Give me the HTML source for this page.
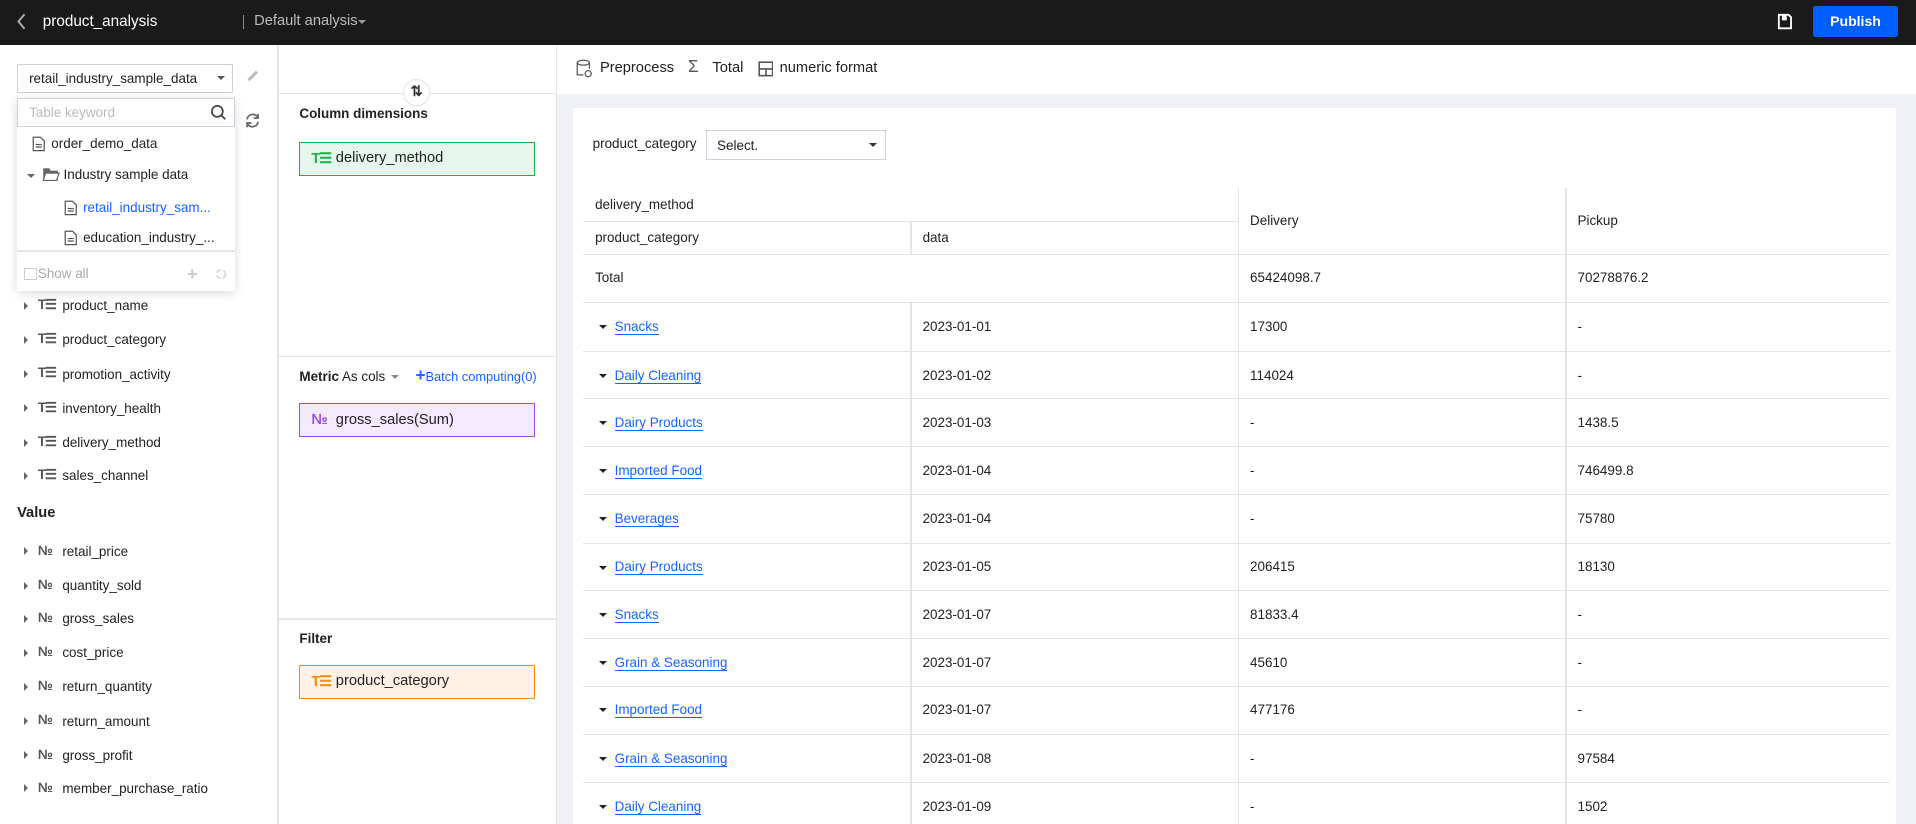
<!DOCTYPE html>
<html><head><meta charset="utf-8">
<style>
*{box-sizing:border-box;margin:0;padding:0}
html,body{width:1916px;height:824px;overflow:hidden;background:#fff}
#root{zoom:1.22194;width:1568px;height:675px;position:relative;font-family:"Liberation Sans",Arial,sans-serif;font-size:11px;color:#222}
.a{position:absolute}
.hdr{left:0;top:0;width:1568px;height:37px;background:#1a1a1a}
.t{white-space:nowrap}
.fi{position:absolute;left:0;height:16px;width:227px}
.fi .ar{position:absolute;left:20px;top:4px;width:0;height:0;border-left:4px solid #666;border-top:3.5px solid transparent;border-bottom:3.5px solid transparent}
.fi .ic{position:absolute;left:31px;top:0;font-size:11px;color:#555;font-weight:bold;letter-spacing:-1px}
.fi .tx{position:absolute;left:51px;top:1px}
.row{position:absolute;left:477px;width:1070px;height:39px;border-top:1px solid #e3e4e8}
.row .c1{position:absolute;left:26px;top:13px}
.row .c2{position:absolute;left:278px;top:13px}
.row .c3{position:absolute;left:546px;top:13px}
.row .c4{position:absolute;left:814px;top:13px}
.lk{color:#1664ff;border-bottom:1px solid #1664ff}
.tri{position:absolute;left:13px;top:18px;border-top:4px solid #222;border-left:3.5px solid transparent;border-right:3.5px solid transparent}
</style></head><body><div id="root">
<div class="a hdr"></div>
<svg class="a" style="left:13px;top:11px" width="10" height="14"><path d="M7 1 L2 7 L7 13" stroke="#aaa" stroke-width="1.6" fill="none"/></svg>
<div class="a t" style="left:35px;top:11px;font-size:12.5px;color:#fff">product_analysis</div>
<div class="a" style="left:199px;top:12px;width:1px;height:12px;background:#888"></div>
<div class="a t" style="left:208px;top:11px;font-size:12px;color:#bbb">Default analysis</div>
<div class="a" style="left:293px;top:16px;border-top:4px solid #999;border-left:3.5px solid transparent;border-right:3.5px solid transparent"></div>
<svg class="a" style="left:1454px;top:11px" width="13" height="14"><path d="M1.5 1.5h8l2 2v9h-10z" stroke="#fff" stroke-width="1.5" fill="none"/><rect x="4" y="2" width="4" height="4" fill="#fff"/></svg>
<div class="a" style="left:1484px;top:5px;width:69px;height:25px;background:#0060ff;border-radius:2px;color:#fff;font-weight:bold;font-size:11.5px;text-align:center;line-height:25px">Publish</div>

<div class="a" style="left:227px;top:37px;width:1px;height:638px;background:#e3e4e8"></div>
<div class="a" style="left:14px;top:52px;width:177px;height:24px;border:1px solid #cfd2da;"><span class="a t" style="left:9px;top:5px">retail_industry_sample_data</span><span class="a" style="left:163px;top:9px;border-top:4px solid #555;border-left:3.5px solid transparent;border-right:3.5px solid transparent"></span></div>
<svg class="a" style="left:201px;top:56px" width="12" height="12"><path d="M2 10 L9 3" stroke="#bbb" stroke-width="2.5"/></svg>
<svg class="a" style="left:200px;top:92px" width="14" height="14"><path d="M2.5 6a4.7 4.7 0 0 1 8.5-2M11.5 8a4.7 4.7 0 0 1-8.5 2" stroke="#666" stroke-width="1.4" fill="none"/><path d="M11.5 1.5v3.5h-3.5M2.5 12.5v-3.5h3.5" stroke="#666" stroke-width="1.4" fill="none"/></svg>
<div class="a" style="left:14px;top:80px;width:178px;height:158px;background:#fff;box-shadow:0 2px 8px rgba(0,0,0,.15)">
 <div class="a" style="left:0;top:0;width:178px;height:24px;border:1px solid #cfd2da"><span class="a t" style="left:9px;top:5px;color:#bbb">Table keyword</span>
 <svg class="a" style="left:157px;top:4px" width="14" height="14"><circle cx="6" cy="6" r="4.5" stroke="#444" stroke-width="1.4" fill="none"/><path d="M9.3 9.3L12.5 12.5" stroke="#444" stroke-width="1.5"/></svg></div>
 <svg class="a" style="left:12px;top:31px" width="11" height="13"><path d="M1 1h6l3 3v8h-9z" stroke="#555" fill="none"/><path d="M3 7h5M3 9h5" stroke="#555"/></svg>
 <span class="a t" style="left:28px;top:31px">order_demo_data</span>
 <span class="a" style="left:8px;top:62px;border-top:4px solid #666;border-left:3.5px solid transparent;border-right:3.5px solid transparent"></span>
 <svg class="a" style="left:20px;top:57px" width="15" height="12"><path d="M1 1h5l1 2h6v8h-12z" fill="#666"/><path d="M3 5h11l-2 6h-11z" fill="#fff" stroke="#666"/></svg>
 <span class="a t" style="left:38px;top:57px">Industry sample data</span>
 <svg class="a" style="left:38px;top:84px" width="11" height="13"><path d="M1 1h6l3 3v8h-9z" stroke="#555" fill="none"/><path d="M3 7h5M3 9h5" stroke="#555"/></svg>
 <span class="a t" style="left:54px;top:84px;color:#1664ff">retail_industry_sam...</span>
 <svg class="a" style="left:38px;top:108px" width="11" height="13"><path d="M1 1h6l3 3v8h-9z" stroke="#555" fill="none"/><path d="M3 7h5M3 9h5" stroke="#555"/></svg>
 <span class="a t" style="left:54px;top:108px">education_industry_...</span>
 <div class="a" style="left:0;top:125px;width:178px;height:1px;background:#e3e4e8"></div>
 <div class="a" style="left:6px;top:139px;width:10px;height:10px;border:1px solid #ccc"></div>
 <span class="a t" style="left:17px;top:138px;color:#aaa">Show all</span>
 <span class="a t" style="left:139px;top:135px;color:#ccc;font-size:15px;font-weight:bold">+</span>
 <svg class="a" style="left:162px;top:139px" width="10" height="10"><circle cx="5" cy="5" r="3.5" stroke="#ccc" fill="none" stroke-dasharray="4 2"/></svg>
</div>

<div class="fi" style="top:243px"><span class="ar"></span><span class="ic">T☰</span><span class="tx">product_name</span></div>
<div class="fi" style="top:271px"><span class="ar"></span><span class="ic">T☰</span><span class="tx">product_category</span></div>
<div class="fi" style="top:299px"><span class="ar"></span><span class="ic">T☰</span><span class="tx">promotion_activity</span></div>
<div class="fi" style="top:327px"><span class="ar"></span><span class="ic">T☰</span><span class="tx">inventory_health</span></div>
<div class="fi" style="top:355px"><span class="ar"></span><span class="ic">T☰</span><span class="tx">delivery_method</span></div>
<div class="fi" style="top:382px"><span class="ar"></span><span class="ic">T☰</span><span class="tx">sales_channel</span></div>
<div class="a t" style="left:14px;top:413px;font-weight:bold;font-size:12px">Value</div>
<div class="fi" style="top:444px"><span class="ar"></span><span class="ic">№</span><span class="tx">retail_price</span></div>
<div class="fi" style="top:472px"><span class="ar"></span><span class="ic">№</span><span class="tx">quantity_sold</span></div>
<div class="fi" style="top:499px"><span class="ar"></span><span class="ic">№</span><span class="tx">gross_sales</span></div>
<div class="fi" style="top:527px"><span class="ar"></span><span class="ic">№</span><span class="tx">cost_price</span></div>
<div class="fi" style="top:555px"><span class="ar"></span><span class="ic">№</span><span class="tx">return_quantity</span></div>
<div class="fi" style="top:583px"><span class="ar"></span><span class="ic">№</span><span class="tx">return_amount</span></div>
<div class="fi" style="top:611px"><span class="ar"></span><span class="ic">№</span><span class="tx">gross_profit</span></div>
<div class="fi" style="top:638px"><span class="ar"></span><span class="ic">№</span><span class="tx">member_purchase_ratio</span></div>

<div class="a" style="left:455px;top:37px;width:1px;height:638px;background:#e3e4e8"></div>
<div class="a" style="left:228px;top:76px;width:227px;height:1px;background:#e3e4e8"></div>
<div class="a" style="left:330px;top:65px;width:22px;height:22px;border-radius:50%;background:#fff;border:1px solid #e3e4e8;text-align:center;font-weight:bold;font-size:12px;line-height:20px;color:#333">⇅</div>
<div class="a t" style="left:245px;top:87px;font-weight:bold">Column dimensions</div>
<div class="a" style="left:245px;top:116px;width:193px;height:28px;background:#e5f6ec;border:1px solid #1cb04b"><span class="a t" style="left:9px;top:6px;color:#1cb04b;font-weight:bold;font-size:12px;letter-spacing:-1px">T☰</span><span class="a t" style="left:29px;top:6px;font-size:12px">delivery_method</span></div>
<div class="a" style="left:228px;top:291px;width:227px;height:1px;background:#e3e4e8"></div>
<div class="a t" style="left:245px;top:302px"><b>Metric</b> As cols</div>
<div class="a" style="left:320px;top:307px;border-top:4px solid #888;border-left:3.5px solid transparent;border-right:3.5px solid transparent"></div>
<div class="a t" style="left:340px;top:302px;color:#1664ff;font-size:10.5px"><b style="font-size:14px;line-height:10px">+</b>Batch computing(0)</div>
<div class="a" style="left:245px;top:330px;width:193px;height:28px;background:#f3eafe;border:1px solid #9e4de8"><span class="a t" style="left:9px;top:6px;color:#9e4de8;font-weight:bold;font-size:12px">№</span><span class="a t" style="left:29px;top:6px;font-size:12px">gross_sales(Sum)</span></div>
<div class="a" style="left:228px;top:506px;width:227px;height:1px;background:#e3e4e8"></div>
<div class="a t" style="left:245px;top:516px;font-weight:bold">Filter</div>
<div class="a" style="left:245px;top:544px;width:193px;height:28px;background:#fff2e4;border:1px solid #f28c0e"><span class="a t" style="left:9px;top:6px;color:#f28c0e;font-weight:bold;font-size:12px;letter-spacing:-1px">T☰</span><span class="a t" style="left:29px;top:6px;font-size:12px">product_category</span></div>

<svg class="a" style="left:471px;top:48px" width="14" height="16"><ellipse cx="6" cy="3" rx="5" ry="2" stroke="#555" fill="none"/><path d="M1 3v10h5M11 3v5" stroke="#555" fill="none"/><circle cx="10" cy="12" r="2.5" stroke="#555" fill="none"/></svg>
<div class="a t" style="left:491px;top:49px;font-size:12px">Preprocess</div>
<div class="a t" style="left:563px;top:47px;font-size:14px;color:#555">Σ</div>
<div class="a t" style="left:583px;top:49px;font-size:12px">Total</div>
<svg class="a" style="left:620px;top:50px" width="13" height="13"><rect x="1" y="1" width="11" height="11" stroke="#555" fill="none" stroke-width="1.3"/><path d="M1 6.5h11M6.5 6.5v5.5" stroke="#555" stroke-width="1.3"/></svg>
<div class="a t" style="left:638px;top:49px;font-size:12px">numeric format</div>
<div class="a" style="left:456px;top:77px;width:1112px;height:598px;background:#f0f1f4"></div>
<div class="a" style="left:469px;top:88px;width:1083px;height:587px;background:#fff"></div>
<div class="a t" style="left:485px;top:111px">product_category</div>
<div class="a" style="left:578px;top:106px;width:147px;height:25px;border:1px solid #cfd2da"><span class="a t" style="left:8px;top:6px">Select.</span><span class="a" style="left:132px;top:10px;border-top:4px solid #333;border-left:3.5px solid transparent;border-right:3.5px solid transparent"></span></div>

<div class="a t" style="left:487px;top:161px">delivery_method</div>
<div class="a" style="left:477px;top:181px;width:536px;height:1px;background:#e3e4e8"></div>
<div class="a" style="left:1013px;top:154px;width:1px;height:521px;background:#e3e4e8;z-index:2"></div>
<div class="a" style="left:1281px;top:154px;width:1px;height:521px;background:#e3e4e8;z-index:2"></div>
<div class="a" style="left:745px;top:181px;width:1px;height:27px;background:#e3e4e8"></div>
<div class="a t" style="left:487px;top:188px">product_category</div>
<div class="a t" style="left:755px;top:188px">data</div>
<div class="a t" style="left:1023px;top:174px">Delivery</div>
<div class="a t" style="left:1291px;top:174px">Pickup</div>
<div class="a" style="left:477px;top:208px;width:1070px;height:1px;background:#e3e4e8"></div>
<div class="a t" style="left:487px;top:221px">Total</div>
<div class="a t" style="left:1023px;top:221px">65424098.7</div>
<div class="a t" style="left:1291px;top:221px">70278876.2</div>

<div class="row" style="top:247px"><i class="tri"></i><span class="c1"><span class="lk">Snacks</span></span><span class="c2">2023-01-01</span><span class="c3">17300</span><span class="c4">-</span></div>
<div class="row" style="top:287px"><i class="tri"></i><span class="c1"><span class="lk">Daily Cleaning</span></span><span class="c2">2023-01-02</span><span class="c3">114024</span><span class="c4">-</span></div>
<div class="row" style="top:326px"><i class="tri"></i><span class="c1"><span class="lk">Dairy Products</span></span><span class="c2">2023-01-03</span><span class="c3">-</span><span class="c4">1438.5</span></div>
<div class="row" style="top:365px"><i class="tri"></i><span class="c1"><span class="lk">Imported Food</span></span><span class="c2">2023-01-04</span><span class="c3">-</span><span class="c4">746499.8</span></div>
<div class="row" style="top:404px"><i class="tri"></i><span class="c1"><span class="lk">Beverages</span></span><span class="c2">2023-01-04</span><span class="c3">-</span><span class="c4">75780</span></div>
<div class="row" style="top:444px"><i class="tri"></i><span class="c1"><span class="lk">Dairy Products</span></span><span class="c2">2023-01-05</span><span class="c3">206415</span><span class="c4">18130</span></div>
<div class="row" style="top:483px"><i class="tri"></i><span class="c1"><span class="lk">Snacks</span></span><span class="c2">2023-01-07</span><span class="c3">81833.4</span><span class="c4">-</span></div>
<div class="row" style="top:522px"><i class="tri"></i><span class="c1"><span class="lk">Grain &amp; Seasoning</span></span><span class="c2">2023-01-07</span><span class="c3">45610</span><span class="c4">-</span></div>
<div class="row" style="top:561px"><i class="tri"></i><span class="c1"><span class="lk">Imported Food</span></span><span class="c2">2023-01-07</span><span class="c3">477176</span><span class="c4">-</span></div>
<div class="row" style="top:601px"><i class="tri"></i><span class="c1"><span class="lk">Grain &amp; Seasoning</span></span><span class="c2">2023-01-08</span><span class="c3">-</span><span class="c4">97584</span></div>
<div class="row" style="top:640px"><i class="tri"></i><span class="c1"><span class="lk">Daily Cleaning</span></span><span class="c2">2023-01-09</span><span class="c3">-</span><span class="c4">1502</span></div>
<div class="a" style="left:745px;top:247px;width:1px;height:428px;background:#e3e4e8;z-index:2"></div>
</div></body></html>
